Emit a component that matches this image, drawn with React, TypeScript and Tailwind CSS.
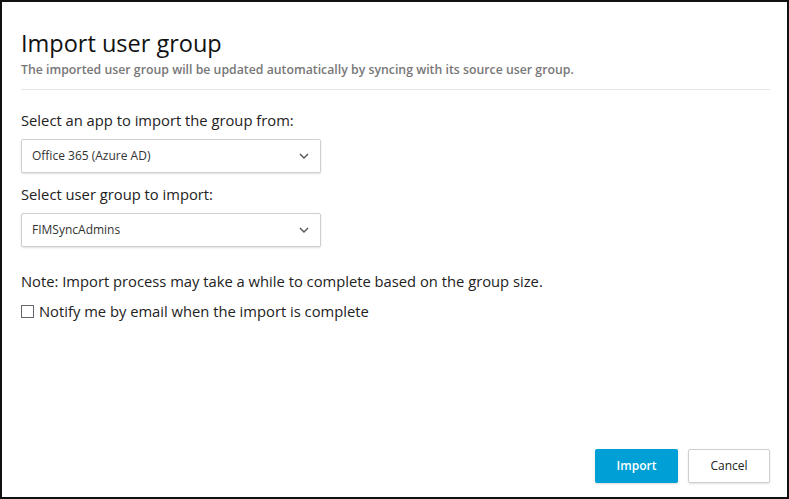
import React from "react";

function Chevron() {
  return (
    <svg width="10" height="6" viewBox="0 0 10 6" fill="none">
      <path d="M1 1l4 4 4-4" stroke="#555" strokeWidth="1.4" />
    </svg>
  );
}

function Select({ value }: { value: string }) {
  return (
    <div className="flex h-[34px] w-[300px] items-center justify-between rounded-[2px] border border-[#cfcfcf] bg-white pl-[10px] pr-[11px] shadow-[0_1px_2px_rgba(0,0,0,0.12)]">
      <span className="text-[12px] text-[#333]">{value}</span>
      <Chevron />
    </div>
  );
}

export default function App() {
  return (
    <div
      className="h-[499px] w-[789px] border-2 border-[#111] bg-white"
      style={{ fontFamily: '"Open Sans", "Noto Sans", sans-serif' }}
    >
      <div className="flex h-full flex-col pl-[19px] pr-[17px]">
        <h1 className="mt-[26px] text-[23.5px] leading-[30px] text-[#111]">Import user group</h1>
        <p className="mt-[4px] text-[12.3px] font-semibold leading-[16px] text-[#777]">
          The imported user group will be updated automatically by syncing with its source user group.
        </p>
        <div className="mt-[11px] h-px bg-[#e6e6e6]" />
        <label className="mt-[20px] text-[14.75px] leading-[20px] text-[#222]">
          Select an app to import the group from:
        </label>
        <div className="mt-[9px]">
          <Select value="Office 365 (Azure AD)" />
        </div>
        <label className="mt-[11px] text-[14.75px] leading-[20px] text-[#222]">
          Select user group to import:
        </label>
        <div className="mt-[9px]">
          <Select value="FIMSyncAdmins" />
        </div>
        <p className="mt-[24px] text-[14.75px] leading-[20px] text-[#222]">
          Note: Import process may take a while to complete based on the group size.
        </p>
        <div className="mt-[10px] flex items-center gap-[5px]">
          <span className="h-[13px] w-[13px] border border-[#666] bg-white" />
          <span className="text-[14.75px] leading-[20px] text-[#222]">
            Notify me by email when the import is complete
          </span>
        </div>
        <div className="mt-auto mb-[14px] flex justify-end gap-[10px]">
          <button className="h-[34px] w-[83px] rounded-[2px] bg-[#009fd6] text-[12px] font-semibold text-white shadow-[0_1px_2px_rgba(0,0,0,0.15)]">
            Import
          </button>
          <button className="h-[34px] w-[82px] rounded-[2px] border border-[#cfcfcf] bg-white text-[12px] text-[#222] shadow-[0_1px_2px_rgba(0,0,0,0.12)]">
            Cancel
          </button>
        </div>
      </div>
    </div>
  );
}
